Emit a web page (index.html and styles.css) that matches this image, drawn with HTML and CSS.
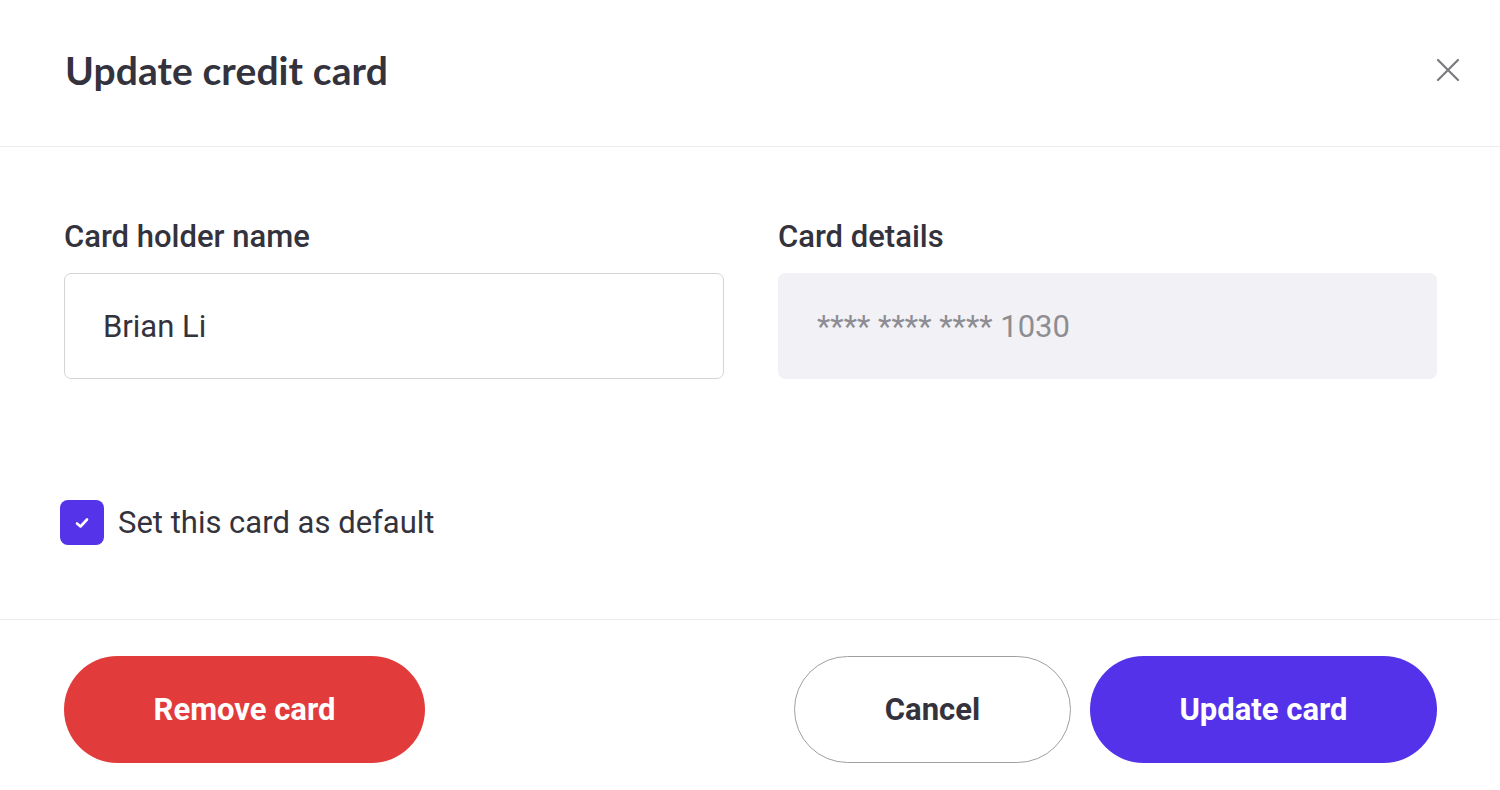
FILE: index.html
```html
<!DOCTYPE html>
<html lang="en">
<head>
<meta charset="utf-8">
<title>Update credit card</title>
<link rel="stylesheet" href="styles.css">
</head>
<body>
<div class="modal">
  <header class="modal-header">
    <h1 class="title">Update credit card</h1>
    <button class="close" aria-label="Close">
      <svg width="24" height="24" viewBox="0 0 24 24"><path d="M2 2 L22 22 M22 2 L2 22" stroke="#7a7a80" stroke-width="2.2" stroke-linecap="round" fill="none"/></svg>
    </button>
  </header>
  <section class="modal-body">
    <div class="fields">
      <div class="field">
        <label class="label">Card holder name</label>
        <div class="input">Brian Li</div>
      </div>
      <div class="field">
        <label class="label">Card details</label>
        <div class="input disabled">**** **** **** 1030</div>
      </div>
    </div>
    <div class="check-row">
      <span class="checkbox">
        <svg width="14" height="12" viewBox="0 0 14 12"><path d="M2 6.5 L5.5 9.5 L12 2.5" stroke="#fff" stroke-width="2.6" stroke-linecap="round" stroke-linejoin="round" fill="none"/></svg>
      </span>
      <span class="check-label">Set this card as default</span>
    </div>
  </section>
  <footer class="modal-footer">
    <button class="btn btn-danger">Remove card</button>
    <div class="right">
      <button class="btn btn-outline">Cancel</button>
      <button class="btn btn-primary">Update card</button>
    </div>
  </footer>
</div>
</body>
</html>
```
FILE: styles.css
```css
* { box-sizing: border-box; }
html, body { margin: 0; padding: 0; background: #fff; }
body { font-family: Roboto, "Liberation Sans", sans-serif; color: #34333d; }
.modal { width: 1500px; height: 790px; }
.modal-header {
  height: 147px;
  border-bottom: 1px solid #ececee;
  display: flex;
  align-items: center;
  justify-content: space-between;
  padding: 0 40px 6px 65px;
}
.title {
  margin: 0;
  font-family: Lato, "Open Sans", sans-serif;
  font-weight: 700;
  font-size: 39px;
  letter-spacing: 0.1px;
  color: #34333d;
}
.close { background: none; border: 0; padding: 0; width: 24px; height: 24px; cursor: pointer; }
.modal-body { padding: 0 63px 0 64px; height: 473px; border-bottom: 1px solid #ececee; }
.fields {
  display: grid;
  grid-template-columns: 660px 659px;
  column-gap: 54px;
  padding-top: 72px;
}
.field { display: flex; flex-direction: column; }
.label {
  font-weight: 500;
  font-size: 31px;
  line-height: 36px;
  margin-bottom: 18px;
  color: #34333d;
}
.input {
  height: 106px;
  border: 1.5px solid #d4d4d8;
  border-radius: 7px;
  display: flex;
  align-items: center;
  padding-left: 38px;
  font-size: 31px;
  color: #34333d;
}
.input.disabled {
  background: #f2f2f6;
  border-color: #f2f2f6;
  color: #8d8d93;
}
.check-row {
  display: flex;
  align-items: center;
  margin-top: 121px;
  margin-left: -4px;
}
.checkbox {
  width: 44px;
  height: 45px;
  border-radius: 8px;
  background: #5433e8;
  display: flex;
  align-items: center;
  justify-content: center;
}
.check-label { font-size: 31px; margin-left: 14px; color: #34333d; }
.modal-footer {
  display: flex;
  justify-content: space-between;
  align-items: flex-start;
  padding: 36px 63px 0 64px;
}
.right { display: flex; gap: 19px; }
.btn {
  height: 107px;
  border-radius: 54px;
  font-family: Roboto, "Liberation Sans", sans-serif;
  font-weight: 700;
  font-size: 31px;
  border: 0;
  cursor: pointer;
}
.btn-danger { width: 361px; background: #e23b3c; color: #fff; }
.btn-outline { width: 277px; background: #fff; border: 1.5px solid #a0a0a4; color: #34333d; }
.btn-primary { width: 347px; background: #5332ea; color: #fff; }
```
